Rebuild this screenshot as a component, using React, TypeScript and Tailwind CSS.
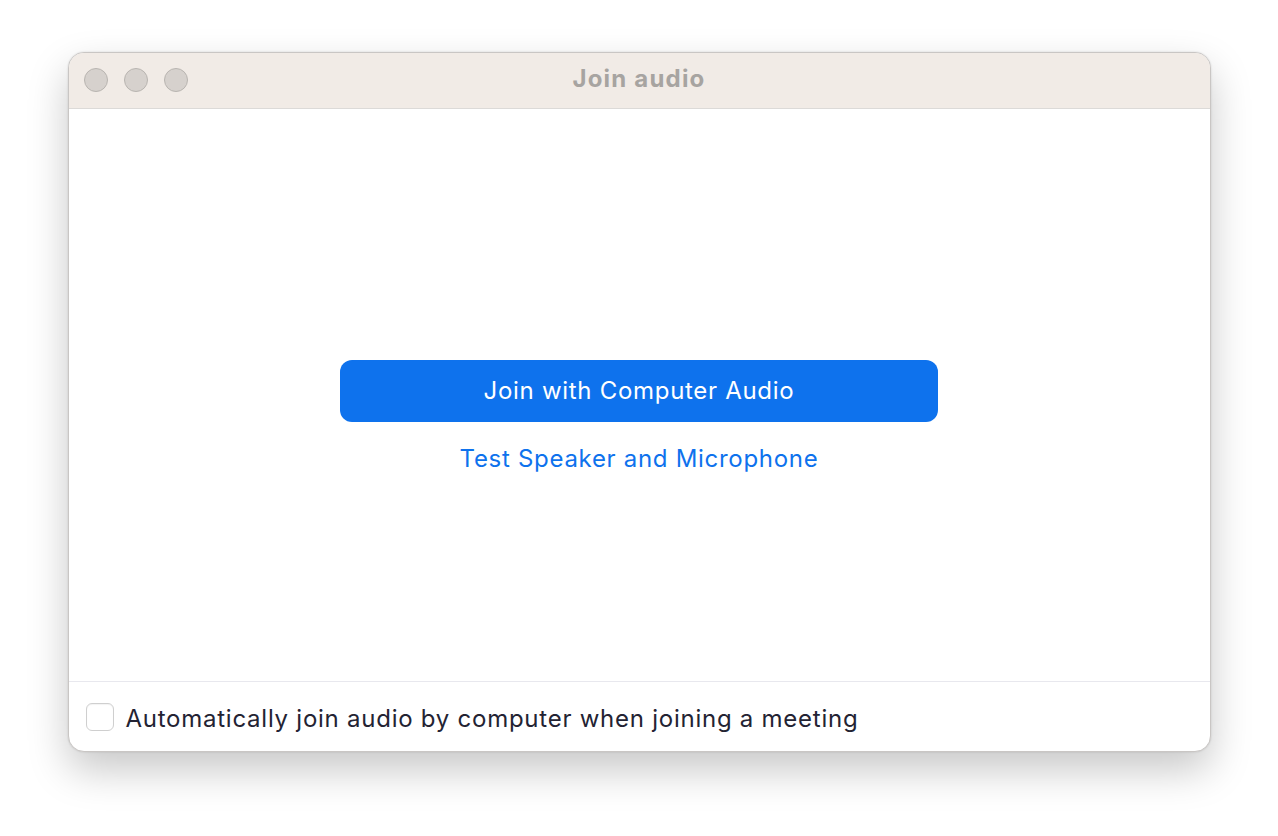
export default function App() {
  return (
    <div className="w-[1278px] h-[836px] bg-white flex items-start justify-center pt-[52px] font-['Inter','Noto_Sans',sans-serif]">
      <div className="w-[1143px] h-[700px] rounded-[16px] border border-[#c9c6c4] bg-white flex flex-col overflow-hidden shadow-[0_18px_40px_rgba(0,0,0,0.22),0_0_2px_rgba(0,0,0,0.15)]">
        <div className="relative h-[56px] shrink-0 bg-[#f1ebe6] border-b border-[#dcdad8] flex items-center justify-center">
          <div className="absolute left-[15px] top-[15px] flex gap-[16px]">
            <span className="w-[24px] h-[24px] rounded-full bg-[#d6d1cd] border border-[#b8b4b0]" />
            <span className="w-[24px] h-[24px] rounded-full bg-[#d6d1cd] border border-[#b8b4b0]" />
            <span className="w-[24px] h-[24px] rounded-full bg-[#d6d1cd] border border-[#b8b4b0]" />
          </div>
          <span className="text-[24px] font-bold text-[#a7a4a1] tracking-[1.2px] mb-[4px]">Join audio</span>
        </div>
        <div className="flex-1 flex flex-col items-center justify-center">
          <button className="w-[598px] h-[62px] rounded-[12px] bg-[#0e72ed] text-white text-[24px] tracking-[0.7px] mt-[46px]">
            Join with Computer Audio
          </button>
          <span className="mt-[19px] text-[24px] tracking-[0.7px] text-[#0e72ed]">Test Speaker and Microphone</span>
        </div>
        <div className="h-[70px] shrink-0 border-t border-[#e8e8ee] flex items-center pl-[17px] gap-[12px]">
          <span className="w-[28px] h-[28px] rounded-[6px] border border-[#cfcfcf] bg-white shadow-[inset_0_1px_1px_rgba(0,0,0,0.05)]" />
          <span className="text-[24px] tracking-[0.75px] text-[#232333] pt-[5px]">Automatically join audio by computer when joining a meeting</span>
        </div>
      </div>
    </div>
  );
}
